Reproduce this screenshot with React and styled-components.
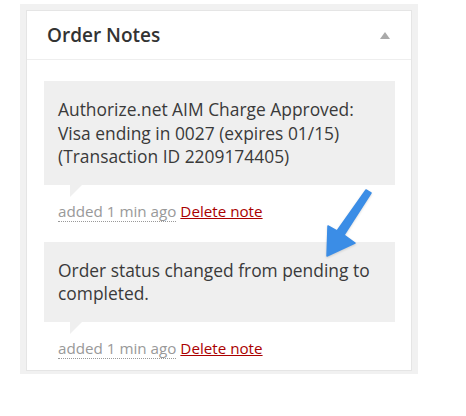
import React from 'react';
import styled, { createGlobalStyle } from 'styled-components';

const GlobalStyle = createGlobalStyle`
  html, body {
    margin: 0;
    padding: 0;
    background: #fff;
  }
  body {
    font-family: "Open Sans", "Liberation Sans", sans-serif;
    color: #333;
  }
`;

const Page = styled.div`
  position: relative;
  width: 466px;
  height: 416px;
  overflow: hidden;
  padding-top: 4px;
  box-sizing: border-box;
`;

const Frame = styled.div`
  margin-left: 20px;
  width: 398px;
  padding: 6px 6px 3px;
  box-sizing: border-box;
  background: #f1f1f1;
`;

const Panel = styled.div`
  background: #fff;
  border: 1px solid #e5e5e5;
`;

const PanelHeader = styled.div`
  display: flex;
  align-items: center;
  justify-content: space-between;
  height: 48px;
  padding: 0 21px 0 20px;
  border-bottom: 1px solid #eee;

  h3 {
    margin: 0;
    font-size: 19px;
    font-weight: 600;
    color: #333;
  }
`;

const Toggle = styled.span`
  width: 0;
  height: 0;
  border-left: 5px solid transparent;
  border-right: 5px solid transparent;
  border-bottom: 7px solid #aaa;
  margin-top: 1px;
`;

const NoteList = styled.ul`
  list-style: none;
  margin: 0;
  padding: 21px 16px 12px 17px;
  display: flex;
  flex-direction: column;
  gap: 21px;
`;

const Note = styled.li`
  margin: 0;
`;

const NoteContent = styled.div`
  position: relative;
  background: #efefef;
  padding: 17px 14px 16px;
  font-size: 17.4px;
  line-height: 23.5px;
  color: #3a3a3a;

  &::after {
    content: '';
    position: absolute;
    left: 26px;
    bottom: -12px;
    width: 0;
    height: 0;
    border-style: solid;
    border-width: 12px 12px 0 0;
    border-color: #efefef transparent;
  }
`;

const NoteMeta = styled.p`
  margin: 16px 0 0 14px;
  font-size: 15.2px;
  line-height: 20px;
  color: #999;

  abbr {
    text-decoration: none;
    border-bottom: 1px dotted #999;
    cursor: help;
  }

  a {
    color: #a00;
    text-decoration: underline;
  }
`;

const Arrow = styled.svg`
  position: absolute;
  left: 0;
  top: 0;
  pointer-events: none;
  filter: drop-shadow(0 1px 1px rgba(0, 0, 0, 0.15));
`;

const notes = [
  {
    id: 1,
    text: (
      <>
        Authorize.net AIM Charge Approved:
        <br />
        Visa ending in 0027 (expires 01/15)
        <br />
        (Transaction ID 2209174405)
      </>
    ),
  },
  {
    id: 2,
    text: (
      <>
        Order status changed from pending to
        <br />
        completed.
      </>
    ),
  },
];

const App = () => (
  <Page>
    <GlobalStyle />
    <Frame>
      <Panel>
        <PanelHeader>
          <h3>Order Notes</h3>
          <Toggle />
        </PanelHeader>
        <NoteList>
          {notes.map((note) => (
            <Note key={note.id}>
              <NoteContent>{note.text}</NoteContent>
              <NoteMeta>
                <abbr title="added">added 1 min ago</abbr>{' '}
                <a href="#delete">Delete note</a>
              </NoteMeta>
            </Note>
          ))}
        </NoteList>
      </Panel>
    </Frame>
    <Arrow width="466" height="416" viewBox="0 0 466 416">
      <path
        d="M366 190 L371 193 L344 235 L355 243 L327 256 L328 226 L337 231 Z"
        fill="#3b8de6"
        stroke="#3b8de6"
        strokeWidth="1.5"
        strokeLinejoin="round"
      />
    </Arrow>
  </Page>
);

export default App;
